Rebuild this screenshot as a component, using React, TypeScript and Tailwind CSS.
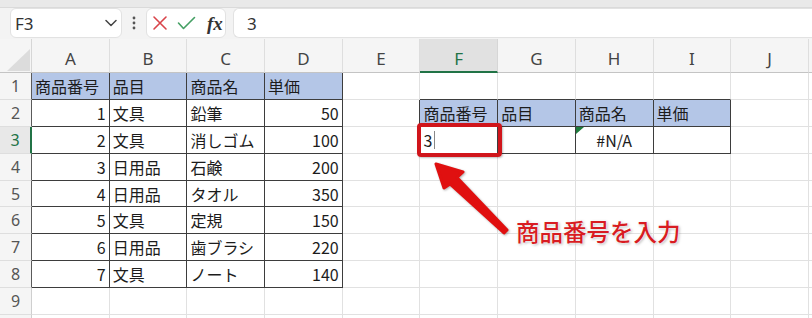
import React from "react";

const COLS = ["A", "B", "C", "D", "E", "F", "G", "H", "I", "J"];
const GRID = "grid grid-cols-[32px_repeat(10,77.7px)_1fr]";

type Cell = { t: string; a?: "l" | "r" | "c"; blue?: boolean };

const data: Record<number, Record<number, Cell>> = {
  1: {
    0: { t: "商品番号", blue: true },
    1: { t: "品目", blue: true },
    2: { t: "商品名", blue: true },
    3: { t: "単価", blue: true },
  },
  2: {
    0: { t: "1", a: "r" },
    1: { t: "文具" },
    2: { t: "鉛筆" },
    3: { t: "50", a: "r" },
    5: { t: "商品番号", blue: true },
    6: { t: "品目", blue: true },
    7: { t: "商品名", blue: true },
    8: { t: "単価", blue: true },
  },
  3: {
    0: { t: "2", a: "r" },
    1: { t: "文具" },
    2: { t: "消しゴム" },
    3: { t: "100", a: "r" },
    7: { t: "#N/A", a: "c" },
  },
  4: { 0: { t: "3", a: "r" }, 1: { t: "日用品" }, 2: { t: "石鹸" }, 3: { t: "200", a: "r" } },
  5: { 0: { t: "4", a: "r" }, 1: { t: "日用品" }, 2: { t: "タオル" }, 3: { t: "350", a: "r" } },
  6: { 0: { t: "5", a: "r" }, 1: { t: "文具" }, 2: { t: "定規" }, 3: { t: "150", a: "r" } },
  7: { 0: { t: "6", a: "r" }, 1: { t: "日用品" }, 2: { t: "歯ブラシ" }, 3: { t: "220", a: "r" } },
  8: { 0: { t: "7", a: "r" }, 1: { t: "文具" }, 2: { t: "ノート" }, 3: { t: "140", a: "r" } },
};

function inTable(r: number, c: number) {
  return (r >= 1 && r <= 8 && c >= 0 && c <= 3) || (r >= 2 && r <= 3 && c >= 5 && c <= 8);
}

function DataCell({ r, c }: { r: number; c: number }) {
  const cell = data[r]?.[c];
  const right = inTable(r, c) || inTable(r, c + 1) ? "border-r-[#3d3d3d]" : "border-r-[#e1e1e1]";
  const bottom = inTable(r, c) || inTable(r + 1, c) ? "border-b-[#3d3d3d]" : "border-b-[#e1e1e1]";
  const bg = cell?.blue ? "bg-[#b4c6e7]" : "bg-white";
  const align =
    cell?.a === "r" ? "justify-end pr-[3px]" : cell?.a === "c" ? "justify-center" : "justify-start pl-[3px]";
  const isF3 = r === 3 && c === 5;
  return (
    <div className={`relative flex items-center border-r border-b ${right} ${bottom} ${bg} ${align}`}>
      {cell && <span className="text-[16px] leading-none text-[#1c1c1c] whitespace-nowrap">{cell.t}</span>}
      {isF3 && (
        <span className="flex items-center">
          <span className="text-[16px] leading-none text-[#1c1c1c]">3</span>
          <span className="ml-[2px] w-px h-[18px] bg-[#888]" />
        </span>
      )}
      {r === 3 && c === 7 && (
        <svg className="absolute left-0 top-0" width="8" height="7" viewBox="0 0 8 7">
          <polygon points="0,0 8,0 0,7" fill="#1e7b3c" />
        </svg>
      )}
    </div>
  );
}

function Row({ r }: { r: number }) {
  const rowHeader =
    r === 3
      ? "border-r-2 border-r-[#217346] text-[#217346] bg-[#e8e8e8]"
      : inTable(r, 0)
      ? "border-r border-r-[#5a5a5a] text-[#555] bg-[#f5f5f5]"
      : "border-r border-r-[#cfcfcf] text-[#555] bg-[#f5f5f5]";
  return (
    <div className={`${GRID} h-[26.9px]`}>
      <div
        className={`flex items-center justify-center border-b border-b-[#dedede] font-['Noto_Sans',sans-serif] text-[16px] leading-none ${rowHeader}`}
      >
        {r <= 9 ? r : ""}
      </div>
      {COLS.map((_, c) => (
        <DataCell key={c} r={r} c={c} />
      ))}
      <div className="border-b border-b-[#e1e1e1] bg-white" />
    </div>
  );
}

export default function App() {
  return (
    <div className="relative w-[812px] h-[318px] overflow-hidden bg-white font-['Noto_Sans_CJK_JP',sans-serif]">
      {/* top strip */}
      <div className="h-[8px] bg-[#e9e9e9] border-b border-b-[#dadada]" />
      {/* formula bar */}
      <div className="h-[31px] bg-[#f3f3f3] flex items-start">
        <div className="ml-[10px] w-[112px] h-[30px] bg-white border border-[#e2e2e2] rounded-[6px] flex items-center justify-between pl-[4px] pr-[4px]">
          <span className="font-['Noto_Sans',sans-serif] text-[17px] leading-none text-[#333]">F3</span>
          <svg width="12" height="8" viewBox="0 0 12 8">
            <polyline points="1,1.5 6,6.5 11,1.5" fill="none" stroke="#444" strokeWidth="1.5" strokeLinecap="round" strokeLinejoin="round" />
          </svg>
        </div>
        <div className="w-[24px] h-[30px] flex items-center justify-center">
          <svg width="4" height="14" viewBox="0 0 4 14">
            <circle cx="2" cy="2" r="1.4" fill="#555" />
            <circle cx="2" cy="7" r="1.4" fill="#555" />
            <circle cx="2" cy="12" r="1.4" fill="#555" />
          </svg>
        </div>
        <div className="w-[80px] h-[30px] bg-white border border-[#e2e2e2] rounded-[6px] flex items-center pl-[5px]">
          <svg width="16" height="16" viewBox="0 0 16 16">
            <path d="M2 2 L14 14 M14 2 L2 14" stroke="#d9444a" strokeWidth="1.6" strokeLinecap="round" />
          </svg>
          <svg className="ml-[9px]" width="19" height="14" viewBox="0 0 19 14">
            <polyline points="1.5,7 6.5,12.5 17.5,1.5" fill="none" stroke="#45a064" strokeWidth="1.6" strokeLinecap="round" strokeLinejoin="round" />
          </svg>
          <span className="ml-[11px] font-['Liberation_Serif',serif] italic font-bold text-[19px] leading-none text-[#333]">fx</span>
        </div>
        <div className="ml-[7px] flex-1 h-[30px] bg-white border border-r-0 border-[#e2e2e2] rounded-l-[6px] flex items-center pl-[13px]">
          <span className="font-['Noto_Sans',sans-serif] text-[17px] leading-none text-[#333]">3</span>
        </div>
      </div>
      {/* column headers */}
      <div className={`${GRID} h-[34px] bg-[#f5f5f5]`}>
        <div className="relative border-r border-r-[#d6d6d6] border-b border-b-[#c4c4c4]">
          <svg className="absolute left-[7px] top-[10px]" width="24" height="22" viewBox="0 0 24 22">
            <polygon points="23,0 23,22 0,22" fill="#dcdcdc" />
          </svg>
        </div>
        {COLS.map((l) =>
          l === "F" ? (
            <div
              key={l}
              className="flex items-center justify-center pt-[6px] bg-[#e1e1e1] border-r border-r-[#d6d6d6] border-b-2 border-b-[#217346] font-['Noto_Sans',sans-serif] text-[17px] leading-none text-[#217346]"
            >
              {l}
            </div>
          ) : (
            <div
              key={l}
              className="flex items-center justify-center pt-[6px] border-r border-r-[#dedede] border-b border-b-[#c4c4c4] font-['Noto_Sans',sans-serif] text-[17px] leading-none text-[#444]"
            >
              {l}
            </div>
          )
        )}
        <div className="border-b border-b-[#c4c4c4]" />
      </div>
      {/* rows */}
      {[1, 2, 3, 4, 5, 6, 7, 8, 9, 10].map((r) => (
        <Row key={r} r={r} />
      ))}

      {/* annotation: red box */}
      <div className="absolute left-[417px] top-[123px] w-[85px] h-[34px] border-4 border-[#d0151b] rounded-[4px] shadow-[1px_1px_2px_rgba(0,0,0,0.25)]" />
      {/* annotation: arrow */}
      <svg
        className="absolute left-0 top-0 pointer-events-none drop-shadow-[1px_1px_1px_rgba(0,0,0,0.3)]"
        width="812"
        height="318"
        viewBox="0 0 812 318"
      >
        <polygon
          points="436,164 463,172 457,177.5 507,230 504,233 450,184 444,188"
          fill="#e01010"
          stroke="#e01010"
          strokeWidth="3"
          strokeLinejoin="round"
        />
      </svg>
      {/* annotation: text */}
      <div className="absolute left-[516px] top-[220px] whitespace-nowrap text-[23.5px] leading-none font-medium text-[#d81c22] [text-shadow:0_0_2px_#fff,0_0_2px_#fff,1px_1px_3px_rgba(0,0,0,0.35)]">
        商品番号を入力
      </div>
    </div>
  );
}
